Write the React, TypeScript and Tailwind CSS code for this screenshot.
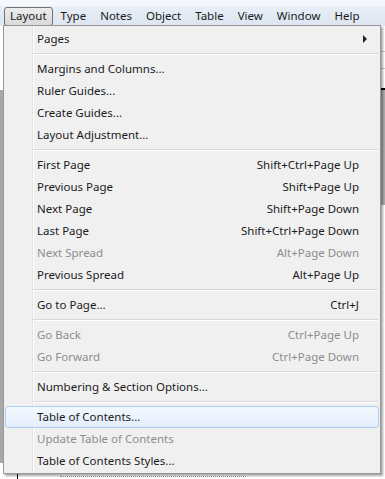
import React from "react";

type Item =
  | { kind: "sep" }
  | {
      kind: "item";
      label: string;
      shortcut?: string;
      disabled?: boolean;
      submenu?: boolean;
      active?: boolean;
    };

const items: Item[] = [
  { kind: "item", label: "Pages", submenu: true },
  { kind: "sep" },
  { kind: "item", label: "Margins and Columns..." },
  { kind: "item", label: "Ruler Guides..." },
  { kind: "item", label: "Create Guides..." },
  { kind: "item", label: "Layout Adjustment..." },
  { kind: "sep" },
  { kind: "item", label: "First Page", shortcut: "Shift+Ctrl+Page Up" },
  { kind: "item", label: "Previous Page", shortcut: "Shift+Page Up" },
  { kind: "item", label: "Next Page", shortcut: "Shift+Page Down" },
  { kind: "item", label: "Last Page", shortcut: "Shift+Ctrl+Page Down" },
  { kind: "item", label: "Next Spread", shortcut: "Alt+Page Down", disabled: true },
  { kind: "item", label: "Previous Spread", shortcut: "Alt+Page Up" },
  { kind: "sep" },
  { kind: "item", label: "Go to Page...", shortcut: "Ctrl+J" },
  { kind: "sep" },
  { kind: "item", label: "Go Back", shortcut: "Ctrl+Page Up", disabled: true },
  { kind: "item", label: "Go Forward", shortcut: "Ctrl+Page Down", disabled: true },
  { kind: "sep" },
  { kind: "item", label: "Numbering & Section Options..." },
  { kind: "sep" },
  { kind: "item", label: "Table of Contents...", active: true },
  { kind: "item", label: "Update Table of Contents", disabled: true },
  { kind: "item", label: "Table of Contents Styles..." },
];

const menus = ["Layout", "Type", "Notes", "Object", "Table", "View", "Window", "Help"];

function MenuRow({ item }: { item: Item }) {
  if (item.kind === "sep") {
    return (
      <div className="flex h-[8px] items-center pl-[29px] pr-[2px]">
        <div className="h-[2px] w-full border-t border-b border-t-[#d7d7d7] border-b-white" />
      </div>
    );
  }
  return (
    <div
      className={
        "flex h-[22px] items-center " +
        (item.active
          ? "mx-[1px] rounded-[3px] border border-[#aecff7] bg-gradient-to-b from-[#f3f8fe] to-[#e3edfb] pl-[31px] pr-[19px]"
          : "pl-[33px] pr-[21px]") +
        (item.disabled ? " text-[#8d8d8d]" : " text-[#1b1b1b]")
      }
    >
      <span className="flex-1 whitespace-nowrap">{item.label}</span>
      {item.shortcut && <span className="whitespace-nowrap">{item.shortcut}</span>}
      {item.submenu && (
        <svg width="5" height="8" viewBox="0 0 5 8" className="mr-[-9px]">
          <path d="M0 0 L4 4 L0 8 Z" fill="#222" />
        </svg>
      )}
    </div>
  );
}

export default function App() {
  return (
    <div
      className="relative h-[479px] w-[385px] overflow-hidden bg-white text-[11.5px]"
      style={{ fontFamily: '"Noto Sans", "Open Sans", sans-serif' }}
    >
      {/* menu bar */}
      <div className="h-[6px] bg-[#f4f7fb]" />
      <div className="flex h-[20px] items-center bg-gradient-to-b from-[#e9eff7] to-[#dce5f0] pl-[4px] text-[#1b1b1b]">
        {menus.map((m, i) => (
          <div
            key={m}
            className={
              "flex h-[19px] items-center " +
              (i === 0
                ? "mr-[3px] rounded-[3px] border border-[#707070] bg-gradient-to-b from-[#ececec] to-[#dadada] px-[5px]"
                : "mr-[4px] px-[5px]")
            }
          >
            {m}
          </div>
        ))}
      </div>

      {/* document behind */}
      <div className="flex h-[453px]">
        <div className="flex w-[3px] flex-col">
          <div className="h-[64px] bg-white" />
          <div className="h-[373px] bg-[#a8a8a8]" />
          <div className="flex-1 bg-white" />
        </div>
        <div className="relative flex-1">
          <div className="absolute bottom-0 left-[14px] h-[5px] w-[1px] bg-black" />
          <div className="absolute bottom-[2px] left-[57px] w-[186px] border-t border-dotted border-[#9a9a9a]" />
        </div>
        <div className="flex w-[4px] flex-col">
          <div className="h-[26px] border-b border-[#c8c8c8] bg-white" />
          <div className="h-[17px] border-b border-[#c8c8c8] bg-white" />
          <div className="h-[19px] bg-white" />
          <div className="h-[2px] bg-black" />
          <div className="h-[115px] bg-[#acacac]" />
          <div className="flex-1 bg-white" />
        </div>
      </div>

      {/* dropdown */}
      <div className="absolute left-[3px] top-[25px] w-[378px] border border-[#979797] bg-[#f0f0f0] pb-[1px] pt-[2px] shadow-[2px_2px_2px_rgba(0,0,0,0.35)]">
        <div className="absolute bottom-[1px] left-[28px] top-[1px] w-[2px] border-l border-r border-l-[#e2e3e3] border-r-white" />
        <div className="relative">
          {items.map((it, i) => (
            <MenuRow key={i} item={it} />
          ))}
        </div>
      </div>
    </div>
  );
}
